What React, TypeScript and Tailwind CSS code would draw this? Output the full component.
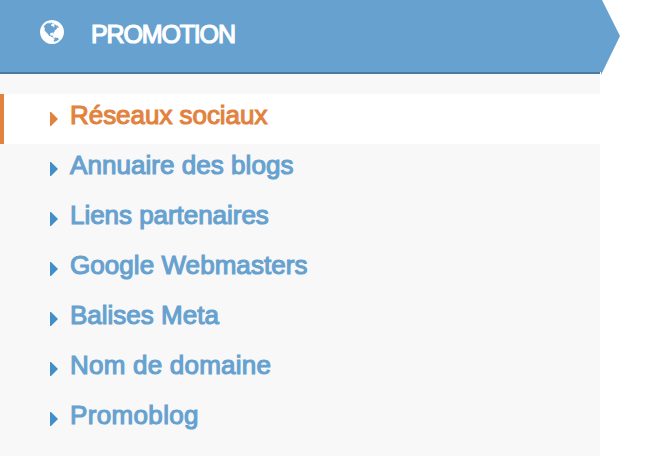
import { clsx } from "clsx";

const items = [
  { label: "Réseaux sociaux", tracking: "tracking-[-0.04px]", active: true },
  { label: "Annuaire des blogs", tracking: "tracking-[0.05px]" },
  { label: "Liens partenaires", tracking: "tracking-[-0.04px]" },
  { label: "Google Webmasters", tracking: "tracking-[0.06px]" },
  { label: "Balises Meta", tracking: "tracking-normal" },
  { label: "Nom de domaine", tracking: "tracking-[0.22px]" },
  { label: "Promoblog", tracking: "tracking-[0.35px]" },
];

function GlobeIcon() {
  return (
    <svg viewBox="0 128 1536 1536" className="h-6 w-6" fill="currentColor" aria-hidden="true">
      <path d="M768 128q209 0 385.500 103t279.500 279.500 103 385.500-103 385.500-279.500 279.500-385.500 103-385.500-103-279.500-279.500-103-385.500 103-385.500 279.500-279.500 385.500-103zm274 521q-2 1-9.500 9.500t-13.500 9.500q2 0 4.500-5t5-11 3.500-7q6-7 22-15 14-6 52-12 34-8 51 11-2-2 9.500-13t14.500-12q3-2 15-4.500t15-7.500l2-22q-12 1-17.500-7t-6.500-21q0 2-6 8 0-7-4.500-8t-11.500 1-9 1q-10-3-15-7.500t-8-16.500-4-15q-2-5-9.500-11t-9.500-10q-1-2-2.500-5.500t-3-6.500-4-5.500-5.500-2.500-7 5-7.500 10-4.500 5q-3-2-6-1.500t-4.500 1-4.500 3-5 3.500q-3 2-8.500 3t-8.500 2q15-5-1-11-10-4-16-3 9-4 7.500-12t-8.500-14h5q-1-4-8.500-8.500t-17.500-8.500-13-6q-8-5-34-9.500t-33-.5q-5 6-4.500 10.500t4 14 3.500 12.500q1 6-5.500 13t-6.500 12q0 7 14 15.500t10 21.500q-3 8-16 16t-16 12q-5 8-1.500 18.500t10.500 16.500q2 2 1.500 4t-3.500 4.500-5.500 4-6.500 3.500l-3 2q-11 5-20.500-6t-13.500-26q-7-25-16-30-23-8-29 1-5-13-41-26-25-9-58-4 6-1 0-15-7-15-19-12 3-6 4-17.500t1-13.500q3-13 12-23 1-1 7-8.500t9.500-13.500.5-6q35 4 50-11 5-5 11.500-17t10.500-17q9-6 14-5.500t14.500 5.500 14.500 5q14 1 15.500-11t-7.500-20q12 1 3-17-4-7-8-9-12-4-27 5-8 4 2 8-1-1-9.500 10.500t-16.500 17.500-16-5q-1-1-5.500-13.500t-9.500-13.500q-8 0-16 15 3-8-11-15t-24-8q19-12-8-27-7-4-20.500-5t-19.500 4q-5 7-5.500 11.500t5 8 10.500 5.500 11.500 4 8.500 3q14 10 8 14-2 1-8.500 3.500t-11.500 4.500-6 4q-3 4 0 14t-2 14q-5-5-9-17.500t-7-16.500q7 9-25 6l-10-1q-4 0-16 2t-20.500 1-13.500-8q-4-8 0-20 1-4 4-2-4-3-11-9.500t-10-8.500q-46 15-94 41 6 1 12-1 5-2 13-6.500t10-5.500q34-14 42-7l5-5q14 16 20 25-7-4-30-1-20 6-22 12 7 12 5 18-4-3-11.500-10t-14.500-11-15-5q-16 0-22 1-146 80-235 222 7 7 12 8 4 1 5 9t2.500 11 11.500-3q9 8 3 19 1-1 44 27 19 17 21 21 3 11-10 18-1-2-9-9t-9-4q-3 5 .5 18.500t10.500 12.500q-7 0-9.500 16t-2.500 35.500-1 23.500l2 1q-3 12 5.500 34.500t21.500 19.500q-13 3 20 43 6 8 8 9 3 2 12 7.500t15 10 10 10.500q4 5 10 22.500t14 23.500q-2 6 9.500 20t10.500 23q-1 0-2.500 1t-2.500 1q3 7 15.500 14t15.500 13q1 3 2 10t3 11 8 2q2-20-24-62-15-25-17-29-3-5-5.500-15.500t-4.500-14.500q2 0 6 1.500t8.500 3.500 7.500 4 2 3q-3 7 2 17.500t12 18.500 17 19 12 13q6 6 14 19.500t0 13.500q9 0 20 10t17 20q5 8 8 26t5 24q2 7 8.500 13.500t12.500 9.500l16 8 13 7q5 2 18.500 10.500t21.500 11.500q10 4 16 4t14.500-2.500 13.500-3.500q15-2 29 15t21 21q36 19 55 11-2 1 .5 7.500t8 15.500 9 14.500 5.500 8.500q5 6 18 15t18 15q6-4 7-9-3 8 7 20t18 10q14-3 14-32-31 15-49-18 0-1-2.500-5.500t-4-8.500-2.500-8.500 0-7.500 5-3q9 0 10-3.500t-2-12.500-4-13q-1-8-11-20t-12-15q-5 9-16 8t-16-9q0 1-1.500 5.500t-1.500 6.500q-13 0-15-1 1-3 2.500-17.500t3.500-22.500q1-4 5.500-12t7.500-14.500 4-12.500-4.500-9.500-17.500-2.500q-19 1-26 20-1 3-3 10.500t-5 11.500-9 7q-7 3-24 2t-24-5q-13-8-22.500-29t-9.500-37q0-10 2.500-26.500t3-25-5.500-24.500q3-2 9-9.500t10-10.500q2-1 4.500-1.500t4.500 0 4-1.500 3-6q-1-1-4-3-3-3-4-3 7 3 28.500-1.500t27.500 1.500q15 11 22-2 0-1-2.500-9.500t-.5-13.500q5 27 29 9 3 3 15.500 5t17.500 5q3 2 7 5.500t5.500 4.500 5-.5 8.500-6.500q10 14 12 24 11 40 19 44 7 3 11 2t4.500-9.500 0-14-1.500-12.500l-1-8v-18l-1-8q-15-3-18.500-12t1.500-18.500 15-18.500q1-1 8-3.500t15.500-6.500 12.500-8q21-19 15-35 7 0 11-9-1 0-5-3t-7.500-5-4.500-2q9-5 2-16 5-3 7.500-11t7.500-10q9 12 21 2 7-8 1-16 5-7 20.500-10.500t18.500-9.500q7 2 8-2t1-12 3-12q4-5 15-9t13-5l17-11q3-4 0-4 18 2 31-11 10-11-6-20 3-6-3-9.500t-15-5.500q3-1 11.500-.5t10.500-1.500q15-10-7-16-17-5-43 12zm-163 877q206-36 351-189-3-3-12.500-4.500t-12.500-3.500q-18-7-24-8 1-7-2.500-13t-8-9-12.500-8-11-7q-2-2-7-6t-7-5.500-7.500-4.500-8.500-2-10 1l-3 1q-3 1-5.500 2.500t-5.500 3-4 3 0 2.500q-21-17-36-22-5-1-11-5.500t-10.500-7-10-1.500-11.500 7q-5 5-6 15t-2 13q-7-5 0-17.500t2-18.500q-3-6-10.500-4.500t-12 4.500-11.500 8.500-9 6.500-8.500 5.500-8.500 7.500q-3 4-6 12t-5 11q-2-4-11.500-6.500t-9.500-5.500q2 10 4 35t5 38q7 31-12 48-27 25-29 40-4 22 12 26 0 7-8 20.500t-7 21.500q0 6 2 16z" />
    </svg>
  );
}

export default function App() {
  return (
    <div className="relative h-[456px] w-[646px] overflow-hidden bg-white font-['Liberation_Sans',sans-serif]">
      <nav className="h-full w-[600px] bg-[#f8f8f8]">
        <header className="flex h-[74px] items-center border-b-2 border-[#4a7ba5] bg-[#66a1cf] pb-2 pl-10 text-white">
          <GlobeIcon />
          <h2 className="ml-[27px] pt-[3px] text-[25px] leading-[30px] tracking-[-1.15px] [-webkit-text-stroke:1.2px_currentColor]">
            PROMOTION
          </h2>
        </header>

        <ul className="pt-5">
          {items.map((item) => (
            <li key={item.label}>
              <a
                href="#"
                className={clsx(
                  "flex h-[50px] border-l-4 pl-[46px]",
                  item.active
                    ? "border-[#e2823f] bg-white text-[#e2823f]"
                    : "border-transparent text-[#66a1cf]"
                )}
              >
                <svg
                  viewBox="0 0 8 14"
                  className={clsx(
                    "mt-[18px] h-3.5 w-2 shrink-0",
                    item.active ? "text-[#e2823f]" : "text-[#428fc7]"
                  )}
                >
                  <path d="M0 0h1l7 7-7 7H0z" fill="currentColor" />
                </svg>
                <span
                  className={clsx(
                    "ml-3 whitespace-nowrap text-[26px] leading-[42px] [-webkit-text-stroke:1.1px_currentColor]",
                    item.tracking
                  )}
                >
                  {item.label}
                </span>
              </a>
            </li>
          ))}
        </ul>
      </nav>

      <svg viewBox="0 0 20 75" className="absolute left-[600px] top-0 h-[75px] w-5">
        <path d="M0 0h2l18 36L1 75V72H0z" fill="#66a1cf" />
      </svg>
    </div>
  );
}
